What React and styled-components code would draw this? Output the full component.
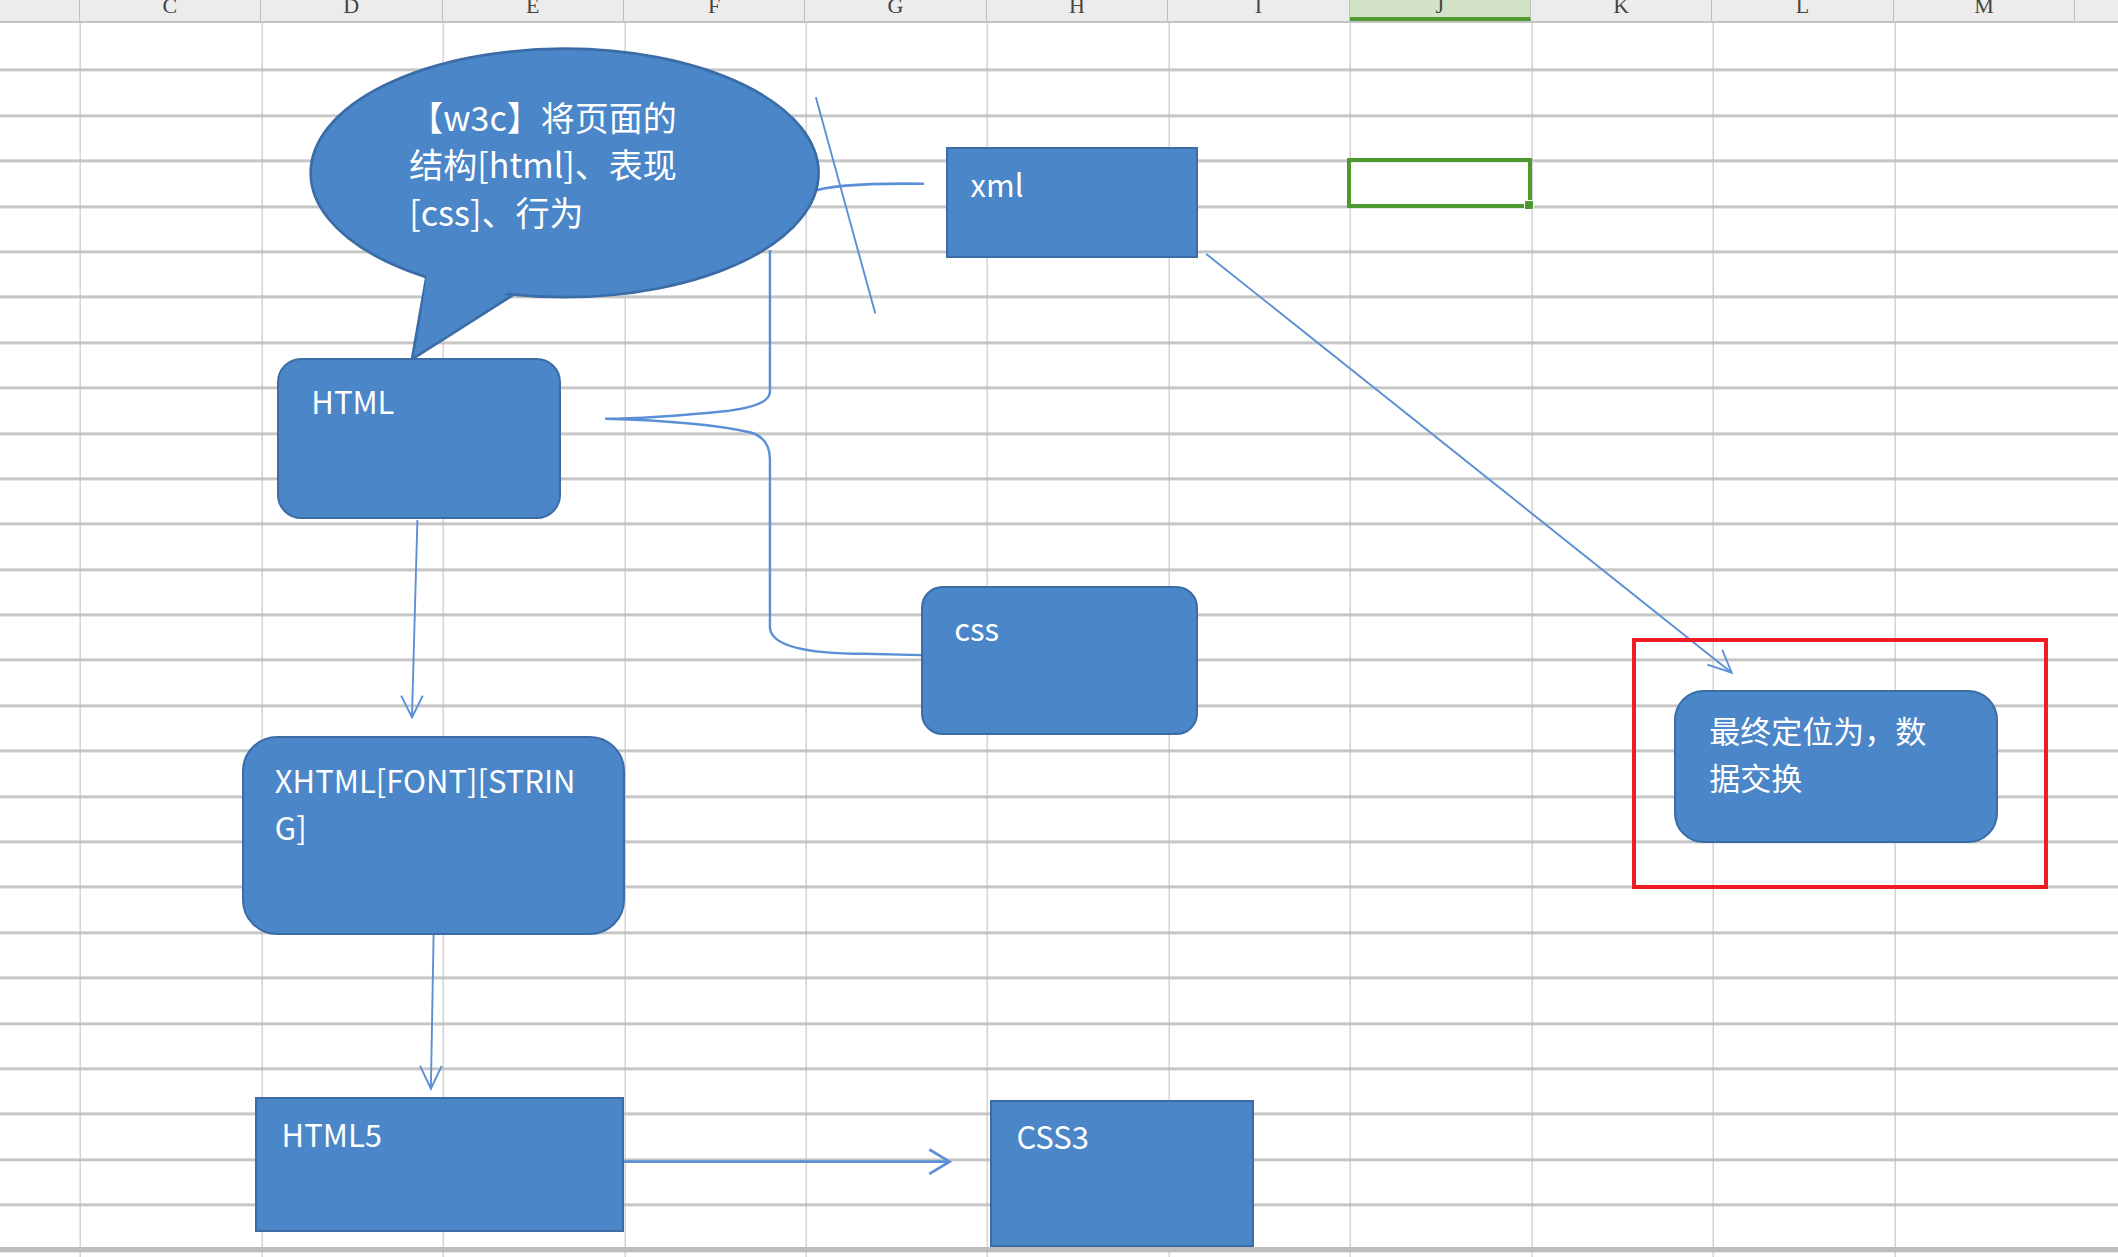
import React from "react";
import styled, { createGlobalStyle } from "styled-components";

const K = 2118 / 1568;
const s = (v) => `${(v * K).toFixed(2)}px`;

const Global = createGlobalStyle`
  html, body { margin: 0; padding: 0; background: #fff; overflow: hidden; }
  body { font-family: "Noto Sans", "Noto Sans CJK SC", sans-serif; }
`;

const Sheet = styled.div`
  position: relative;
  width: 2118px;
  height: 1257px;
  overflow: hidden;
  background: #fff;
`;

const Header = styled.div`
  display: flex;
  height: ${s(17)};
  background: #ececec;
  border-bottom: 2px solid #c4c4c4;
  box-sizing: border-box;
`;

const HeadCell = styled.div`
  flex: 0 0 ${(p) => s(p.$w)};
  box-sizing: border-box;
  border-right: 1px solid #c0c0c0;
  display: flex;
  justify-content: center;
  align-items: flex-end;
  font-family: "Liberation Serif", serif;
  font-size: 22px;
  line-height: 1;
  color: #444;
  overflow: hidden;
  background: ${(p) => (p.$sel ? "#d2e3c8" : "transparent")};
  border-bottom: ${(p) => (p.$sel ? "4px solid #4f9a30" : "none")};
  padding-bottom: ${(p) => (p.$sel ? "0" : "4px")};
`;

const Grid = styled.div`
  position: relative;
  height: calc(1257px - ${s(17)});
  background-image:
    repeating-linear-gradient(to right, transparent 0, transparent calc(${s(134.3)} - 1px), #bdbdbd calc(${s(134.3)} - 1px), #bdbdbd ${s(134.3)}),
    repeating-linear-gradient(to bottom, transparent 0, transparent calc(${s(33.6)} - 3px), #c6c6c6 calc(${s(33.6)} - 3px), #c6c6c6 ${s(33.6)});
  background-position: ${s(59 - 134.3 + 1)} 0, 0 ${s(2.5)};
  &::after {
    content: "";
    position: absolute;
    left: 0; right: 0;
    top: ${s(906)};
    height: 5px;
    background: #bdbdbd;
  }
`;

const Shape = styled.div`
  position: absolute;
  left: ${(p) => s(p.$x)};
  top: ${(p) => s(p.$y)};
  width: ${(p) => s(p.$w)};
  height: ${(p) => s(p.$h)};
  box-sizing: border-box;
  background: #4a86c8;
  border: 2px solid #3b6ca6;
  border-radius: ${(p) => s(p.$r || 0)};
  color: #fff;
  font-family: "Noto Sans CJK SC", "Noto Sans", sans-serif;
  font-size: 31px;
  line-height: ${s(35)};
  padding: ${(p) => `${s(p.$pt)} 0 0 ${s(p.$pl)}`};
  white-space: pre;
  z-index: 2;
`;

const Overlay = styled.svg`
  position: absolute;
  left: 0;
  top: 0;
  width: 2118px;
  height: ${s(914)};
  z-index: ${(p) => p.$z};
  pointer-events: none;
`;

const Bubble = styled.div`
  position: absolute;
  left: ${s(303)};
  top: ${s(52)};
  color: #fff;
  font-family: "Noto Sans CJK SC", "Noto Sans", sans-serif;
  font-size: 34px;
  line-height: ${s(35)};
  white-space: pre;
  z-index: 3;
`;

const Outline = styled.div`
  position: absolute;
  left: ${(p) => s(p.$x)};
  top: ${(p) => s(p.$y)};
  width: ${(p) => s(p.$w)};
  height: ${(p) => s(p.$h)};
  box-sizing: border-box;
  border: 4px solid ${(p) => p.$c};
  z-index: 4;
`;

const Handle = styled.span`
  position: absolute;
  right: -6px;
  bottom: -6px;
  width: 8px;
  height: 8px;
  background: #4f9a30;
  border: 1px solid #fff;
`;

const cols = ["C", "D", "E", "F", "G", "H", "I", "J", "K", "L", "M"];
const Y = (v) => v - 17;

export default function App() {
  return (
    <Sheet>
      <Global />
      <Header>
        <HeadCell $w={59} />
        {cols.map((c) => (
          <HeadCell key={c} $w={134.3} $sel={c === "J"}>{c}</HeadCell>
        ))}
        <HeadCell $w={40} />
      </Header>
      <Grid>
        <Overlay $z={1} viewBox="0 0 1568 914" preserveAspectRatio="none">
          <g fill="none" stroke="#5b8fd6" strokeWidth="1.4">
            <path d={`M604 ${Y(72)} L648 ${Y(232)}`} />
            <path d={`M600 ${Y(142)} Q620 ${Y(135)} 684 ${Y(136)}`} strokeWidth="2" />
            <path d={`M570 ${Y(185)} L570 ${Y(290)} Q570 ${Y(300)} 540 ${Y(304)} Q480 ${Y(310)} 448 ${Y(310)} Q520 ${Y(312)} 555 ${Y(320)} Q570 ${Y(324)} 570 ${Y(340)} L570 ${Y(465)} Q572 ${Y(484)} 640 ${Y(484)} L682 ${Y(485)}`} strokeWidth="1.8" />
            <path d={`M893 ${Y(188)} L1282 ${Y(498)}`} />
            <path d={`M1264 ${Y(492)} L1282 ${Y(498)} L1275 ${Y(481)}`} />
            <path d={`M309 ${Y(385)} L305 ${Y(530)}`} />
            <path d={`M297 ${Y(515)} L305 ${Y(531)} L313 ${Y(515)}`} />
            <path d={`M321 ${Y(692)} L319 ${Y(805)}`} />
            <path d={`M311 ${Y(789)} L319 ${Y(806)} L327 ${Y(789)}`} />
            <path d={`M462 ${Y(860)} L703 ${Y(860)}`} strokeWidth="2" />
            <path d={`M688 ${Y(851)} L703 ${Y(860)} L688 ${Y(869)}`} strokeWidth="2" />
          </g>
          <g fill="#4a86c8" stroke="#3b6ca6" strokeWidth="2">
            <path d={`M316 ${Y(203)} L305 ${Y(266)} L382 ${Y(217)}`} />
            <ellipse cx="418" cy={Y(128)} rx="188" ry="92" />
            <path d={`M316 ${Y(200)} L309 ${Y(258)} L380 ${Y(214)} Z`} stroke="none" />
          </g>
        </Overlay>
        <Bubble>{"【w3c】将页面的\n结构[html]、表现\n[css]、行为"}</Bubble>
        <Shape $x={700} $y={Y(109)} $w={187} $h={82} $pt={8} $pl={17}>xml</Shape>
        <Shape $x={205} $y={Y(265)} $w={210} $h={119} $r={18} $pt={13} $pl={24}>HTML</Shape>
        <Shape $x={682} $y={Y(434)} $w={205} $h={110} $r={16} $pt={12} $pl={23}>css</Shape>
        <Shape $x={179} $y={Y(545)} $w={284} $h={147} $r={26} $pt={13} $pl={23}>{"XHTML[FONT][STRIN\nG]"}</Shape>
        <Shape $x={189} $y={Y(812)} $w={273} $h={100} $pt={8} $pl={18}>HTML5</Shape>
        <Shape $x={733} $y={Y(814)} $w={195} $h={109} $pt={8} $pl={18}>CSS3</Shape>
        <Shape $x={1239} $y={Y(511)} $w={240} $h={113} $r={22} $pt={10} $pl={25}>{"最终定位为，数\n据交换"}</Shape>
        <Outline $x={1208} $y={Y(472)} $w={308} $h={186} $c="#ee1c25" />
        <Outline $x={997} $y={Y(117)} $w={137} $h={37} $c="#4f9a30">
          <Handle />
        </Outline>
      </Grid>
    </Sheet>
  );
}
